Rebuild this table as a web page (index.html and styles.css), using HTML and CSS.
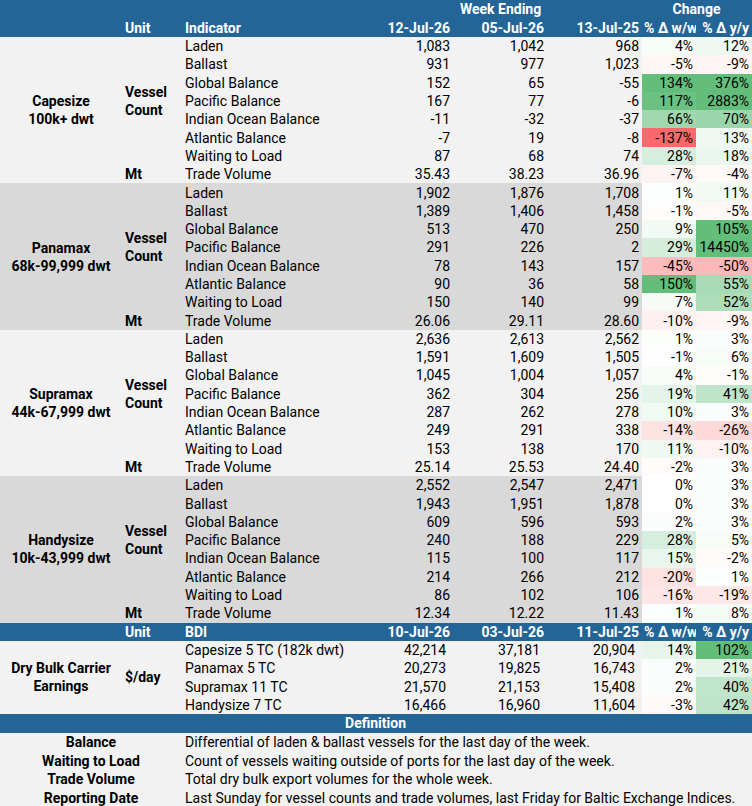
FILE: index.html
```html
<!DOCTYPE html>
<html lang="en">
<head>
  <meta charset="UTF-8">
  <meta name="viewport" content="width=device-width, initial-scale=1.0">
  <link rel="stylesheet" href="styles.css">
</head>

<body>
  <table class="board">
    <colgroup>
      <col class="c-group">
      <col class="c-unit">
      <col class="c-ind">
      <col class="c-v1">
      <col class="c-v2">
      <col class="c-v3">
      <col class="c-ww">
      <col class="c-yy">
    </colgroup>
    <thead>
      <tr class="head top">
        <th colspan="3"></th>
        <th colspan="3" class="mid">Week Ending</th>
        <th colspan="2" class="mid">Change</th>
      </tr>
      <tr class="head top">
        <th></th>
        <th class="left">Unit</th>
        <th class="left">Indicator</th>
        <th>12-Jul-26</th>
        <th>05-Jul-26</th>
        <th>13-Jul-25</th>
        <th>% Δ w/w</th>
        <th>% Δ y/y</th>
      </tr>
    </thead>
    <tbody id="fleet"></tbody>
    <tbody id="earnings">
      <tr class="head">
        <th></th>
        <th class="left">Unit</th>
        <th class="left">BDI</th>
        <th>10-Jul-26</th>
        <th>03-Jul-26</th>
        <th>11-Jul-25</th>
        <th>% Δ w/w</th>
        <th>% Δ y/y</th>
      </tr>
    </tbody>
    <tbody class="defs">
      <tr class="head">
        <th colspan="8" class="mid">Definition</th>
      </tr>
      <tr>
        <td colspan="2" class="term">Balance</td>
        <td colspan="6">Differential of laden &amp; ballast vessels for the last day of the week.</td>
      </tr>
      <tr>
        <td colspan="2" class="term">Waiting to Load</td>
        <td colspan="6">Count of vessels waiting outside of ports for the last day of the week.</td>
      </tr>
      <tr>
        <td colspan="2" class="term">Trade Volume</td>
        <td colspan="6">Total dry bulk export volumes for the whole week.</td>
      </tr>
      <tr>
        <td colspan="2" class="term">Reporting Date</td>
        <td colspan="6">Last Sunday for vessel counts and trade volumes, last Friday for Baltic Exchange Indices.</td>
      </tr>
    </tbody>
  </table>

  <script>
    var GREEN = [99, 190, 123];
    var RED = [248, 105, 107];

    // t > 0 goes toward green, t < 0 toward red, 0 is white
    function heat(t) {
      var base = t < 0 ? RED : GREEN;
      var k = Math.abs(t);
      var c = base.map(function (v) { return Math.round(255 - (255 - v) * k); });
      return "rgb(" + c.join(",") + ")";
    }

    var segments = [
      { name: "Capesize", size: "100k+ dwt", shade: "light", rows: [
        ["Laden", "1,083", "1,042", "968", "4%", .05, "12%", .1],
        ["Ballast", "931", "977", "1,023", "-5%", -.06, "-9%", -.07],
        ["Global Balance", "152", "65", "-55", "134%", 1, "376%", 1],
        ["Pacific Balance", "167", "77", "-6", "117%", .95, "2883%", 1],
        ["Indian Ocean Balance", "-11", "-32", "-37", "66%", .61, "70%", .64],
        ["Atlantic Balance", "-7", "19", "-8", "-137%", -1, "13%", .1],
        ["Waiting to Load", "87", "68", "74", "28%", .26, "18%", .13],
        ["Trade Volume", "35.43", "38.23", "36.96", "-7%", -.08, "-4%", -.04]
      ]},
      { name: "Panamax", size: "68k-99,999 dwt", shade: "dark", rows: [
        ["Laden", "1,902", "1,876", "1,708", "1%", .01, "11%", .09],
        ["Ballast", "1,389", "1,406", "1,458", "-1%", -.02, "-5%", -.05],
        ["Global Balance", "513", "470", "250", "9%", .08, "105%", 1],
        ["Pacific Balance", "291", "226", "2", "29%", .27, "14450%", 1],
        ["Indian Ocean Balance", "78", "143", "157", "-45%", -.45, "-50%", -.47],
        ["Atlantic Balance", "90", "36", "58", "150%", 1, "55%", .56],
        ["Waiting to Load", "150", "140", "99", "7%", .06, "52%", .52],
        ["Trade Volume", "26.06", "29.11", "28.60", "-10%", -.1, "-9%", -.07]
      ]},
      { name: "Supramax", size: "44k-67,999 dwt", shade: "light", rows: [
        ["Laden", "2,636", "2,613", "2,562", "1%", .02, "3%", .03],
        ["Ballast", "1,591", "1,609", "1,505", "-1%", -.01, "6%", .05],
        ["Global Balance", "1,045", "1,004", "1,057", "4%", .05, "-1%", -.02],
        ["Pacific Balance", "362", "304", "256", "19%", .17, "41%", .41],
        ["Indian Ocean Balance", "287", "262", "278", "10%", .09, "3%", .03],
        ["Atlantic Balance", "249", "291", "338", "-14%", -.2, "-26%", -.26],
        ["Waiting to Load", "153", "138", "170", "11%", .1, "-10%", -.09],
        ["Trade Volume", "25.14", "25.53", "24.40", "-2%", -.03, "3%", .03]
      ]},
      { name: "Handysize", size: "10k-43,999 dwt", shade: "dark", rows: [
        ["Laden", "2,552", "2,547", "2,471", "0%", 0, "3%", .03],
        ["Ballast", "1,943", "1,951", "1,878", "0%", 0, "3%", .03],
        ["Global Balance", "609", "596", "593", "2%", .03, "3%", .03],
        ["Pacific Balance", "240", "188", "229", "28%", .26, "5%", .05],
        ["Indian Ocean Balance", "115", "100", "117", "15%", .14, "-2%", -.03],
        ["Atlantic Balance", "214", "266", "212", "-20%", -.2, "1%", .01],
        ["Waiting to Load", "86", "102", "106", "-16%", -.17, "-19%", -.16],
        ["Trade Volume", "12.34", "12.22", "11.43", "1%", .01, "8%", .07]
      ]}
    ];

    var earnings = [
      ["Capesize 5 TC (182k dwt)", "42,214", "37,181", "20,904", "14%", .15, "102%", 1],
      ["Panamax 5 TC", "20,273", "19,825", "16,743", "2%", .03, "21%", .17],
      ["Supramax 11 TC", "21,570", "21,153", "15,408", "2%", .03, "40%", .4],
      ["Handysize 7 TC", "16,466", "16,960", "11,604", "-3%", -.04, "42%", .42]
    ];

    function cells(r, numClass) {
      var html = '<td class="ind">' + r[0] + '</td>';
      for (var i = 1; i <= 3; i++) {
        html += '<td class="' + numClass + '">' + r[i] + '</td>';
      }
      html += '<td class="chg" style="background:' + heat(r[5]) + '">' + r[4] + '</td>';
      html += '<td class="chg" style="background:' + heat(r[7]) + '">' + r[6] + '</td>';
      return html;
    }

    var fleet = document.getElementById("fleet");
    var out = "";
    segments.forEach(function (seg) {
      seg.rows.forEach(function (r, i) {
        out += '<tr class="' + seg.shade + '">';
        if (i == 0) {
          out += '<td rowspan="8" class="group">' + seg.name + '<br>' + seg.size + '</td>';
          out += '<td rowspan="7" class="unit">Vessel<br>Count</td>';
        }
        if (i == 7) {
          out += '<td class="unit">Mt</td>';
        }
        out += cells(r, "num") + '</tr>';
      });
    });
    fleet.innerHTML = out;

    var earn = document.getElementById("earnings");
    earnings.forEach(function (r, i) {
      var tr = document.createElement("tr");
      tr.className = "light";
      var html = "";
      if (i == 0) {
        html += '<td rowspan="4" class="group">Dry Bulk Carrier<br>Earnings</td>';
        html += '<td rowspan="4" class="unit">$/day</td>';
      }
      tr.innerHTML = html + cells(r, "num money");
      earn.appendChild(tr);
    });
  </script>
</body>

</html>
```

FILE: styles.css
```css
body {
  margin: 0;
  font-family: Roboto, "Liberation Sans", sans-serif;
  font-size: 14px;
  color: #000;
  background: #fff;
}

.board {
  width: 752px;
  border-collapse: collapse;
  table-layout: fixed;
}

.c-group { width: 123px; }
.c-unit { width: 60px; }
.c-ind { width: 177px; }
.c-v1 { width: 93px; }
.c-v2 { width: 94px; }
.c-v3 { width: 95px; }
.c-ww { width: 54px; }
.c-yy { width: 56px; }

.board tr {
  height: 18.3px;
}

.board td, .board th {
  padding: 0 3px 0 2px;
  line-height: 18px;
  white-space: nowrap;
  overflow: hidden;
}

.head th {
  background: #246598;
  color: #fff;
  font-weight: bold;
  text-align: right;
}

.head.top {
  height: 18.5px;
}

.head .left {
  text-align: left;
}

.head .mid {
  text-align: center;
}

.light td {
  background: #f2f2f2;
}

.dark td {
  background: #d9d9d9;
}

.group {
  font-weight: bold;
  text-align: center;
}

.unit {
  font-weight: bold;
  text-align: left;
}

.num, .chg {
  text-align: right;
}

.money {
  padding-right: 7px !important;
}

.defs tr {
  height: 18.7px;
}

.defs td {
  background: #f2f2f2;
}

.defs .term {
  font-weight: bold;
  text-align: center;
}
```
